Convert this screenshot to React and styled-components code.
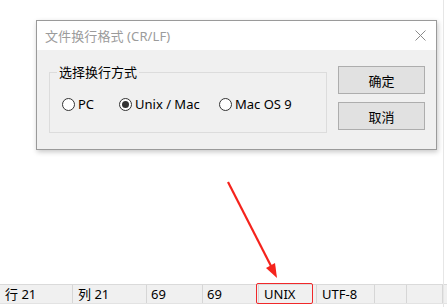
import React from "react";
import styled, { createGlobalStyle } from "styled-components";

const Global = createGlobalStyle`
  html, body { margin: 0; padding: 0; background: #fff; }
  body { font-family: "Noto Sans", "Noto Sans CJK SC", sans-serif; font-size: 13px; color: #000; }
`;

const Page = styled.div`
  position: relative;
  width: 447px;
  height: 307px;
  display: flex;
  flex-direction: column;
  overflow: hidden;
  background: #fff;
`;

const EdgeLine = styled.div`
  position: absolute;
  top: 0;
  bottom: 0;
  left: 443px;
  width: 1px;
  background: #e6e6e6;
`;

const Stage = styled.div`
  flex: 1;
  padding: 20px 0 0 36px;
`;

const Dialog = styled.div`
  width: 399px;
  height: 128px;
  border: 1px solid #9a9a9a;
  box-shadow: 1px 2px 5px rgba(0, 0, 0, 0.22);
  background: #f0f0f0;
  display: flex;
  flex-direction: column;
`;

const TitleBar = styled.div`
  height: 29px;
  background: #fff;
  display: flex;
  align-items: center;
  justify-content: space-between;
  padding: 0 10px 0 8px;
`;

const Title = styled.span`
  color: #9b9b9b;
  font-size: 13px;
  letter-spacing: 0.1px;
`;

const Close = styled.svg`
  width: 11px;
  height: 11px;
`;

const Body = styled.div`
  flex: 1;
  display: flex;
  align-items: flex-start;
  padding-left: 12px;
  gap: 11px;
`;

const Group = styled.div`
  position: relative;
  margin-top: 22px;
  width: 276px;
  height: 59px;
  border: 1px solid #dcdcdc;
`;

const Legend = styled.span`
  position: absolute;
  top: -10px;
  left: 7px;
  padding: 0 2px;
  background: #f0f0f0;
  font-size: 13px;
  line-height: 18px;
`;

const RadioRow = styled.div`
  display: flex;
  align-items: center;
  padding: 23px 0 0 12px;
`;

const RadioItem = styled.label`
  display: flex;
  align-items: center;
  gap: 3px;
  width: ${(p) => p.$w}px;
  font-size: 13px;
  line-height: 16px;
`;

const Circle = styled.span`
  box-sizing: border-box;
  width: 13px;
  height: 13px;
  border-radius: 50%;
  border: 1px solid #333;
  background: #fff;
  display: flex;
  align-items: center;
  justify-content: center;
  &::after {
    content: "";
    width: 7px;
    height: 7px;
    border-radius: 50%;
    background: ${(p) => (p.$on ? "#333" : "transparent")};
  }
`;

const Buttons = styled.div`
  margin-top: 16px;
  display: flex;
  flex-direction: column;
  gap: 8px;
`;

const Button = styled.button`
  box-sizing: border-box;
  width: 87px;
  height: 28px;
  border: 1px solid #adadad;
  background: #e1e1e1;
  font-family: "Noto Sans CJK SC", sans-serif;
  font-size: 13px;
  color: #000;
  padding: 0;
`;

const StatusBar = styled.div`
  height: 18px;
  border-top: 1px solid #dadada;
  border-bottom: 1px solid #e3e3e3;
  background: #f0f0f0;
  margin-bottom: 3px;
  display: flex;
`;

const Cell = styled.div`
  position: relative;
  box-sizing: border-box;
  width: ${(p) => p.$w}px;
  border-right: 1px solid #d6d6d6;
  padding-left: ${(p) => p.$pl ?? 5}px;
  font-size: 13px;
  line-height: 18px;
  white-space: nowrap;
  &::after {
    content: "";
    display: ${(p) => (p.$marked ? "block" : "none")};
    position: absolute;
    left: -3px;
    top: -2px;
    width: 57px;
    height: 21px;
    box-sizing: border-box;
    border: 1.5px solid #f0282a;
    border-radius: 2px;
  }
`;

const Arrow = styled.svg`
  position: absolute;
  left: 0;
  top: 0;
  width: 447px;
  height: 307px;
  pointer-events: none;
`;

export default function App() {
  return (
    <Page>
      <Global />
      <EdgeLine />
      <Stage>
        <Dialog>
          <TitleBar>
            <Title>文件换行格式 (CR/LF)</Title>
            <Close viewBox="0 0 11 11">
              <path d="M0.5 0.5 L10.5 10.5 M10.5 0.5 L0.5 10.5" stroke="#8a8a8a" strokeWidth="1" />
            </Close>
          </TitleBar>
          <Body>
            <Group>
              <Legend>选择换行方式</Legend>
              <RadioRow>
                <RadioItem $w={57}><Circle />PC</RadioItem>
                <RadioItem $w={100}><Circle $on />Unix / Mac</RadioItem>
                <RadioItem $w={100}><Circle />Mac OS 9</RadioItem>
              </RadioRow>
            </Group>
            <Buttons>
              <Button>确定</Button>
              <Button>取消</Button>
            </Buttons>
          </Body>
        </Dialog>
      </Stage>
      <StatusBar>
        <Cell $w={73}>行 21</Cell>
        <Cell $w={74}>列 21</Cell>
        <Cell $w={56} $pl={4}>69</Cell>
        <Cell $w={56} $pl={4}>69</Cell>
        <Cell $w={58} $pl={5} $marked>UNIX</Cell>
        <Cell $w={58}>UTF-8</Cell>
        <Cell $w={32} />
        <Cell $w={36} />
      </StatusBar>
      <Arrow viewBox="0 0 447 307">
        <line x1="228" y1="182" x2="271" y2="266" stroke="#f5231c" strokeWidth="2.2" />
        <polygon points="277,278 266,268 275,263" fill="#f5231c" />
      </Arrow>
    </Page>
  );
}
